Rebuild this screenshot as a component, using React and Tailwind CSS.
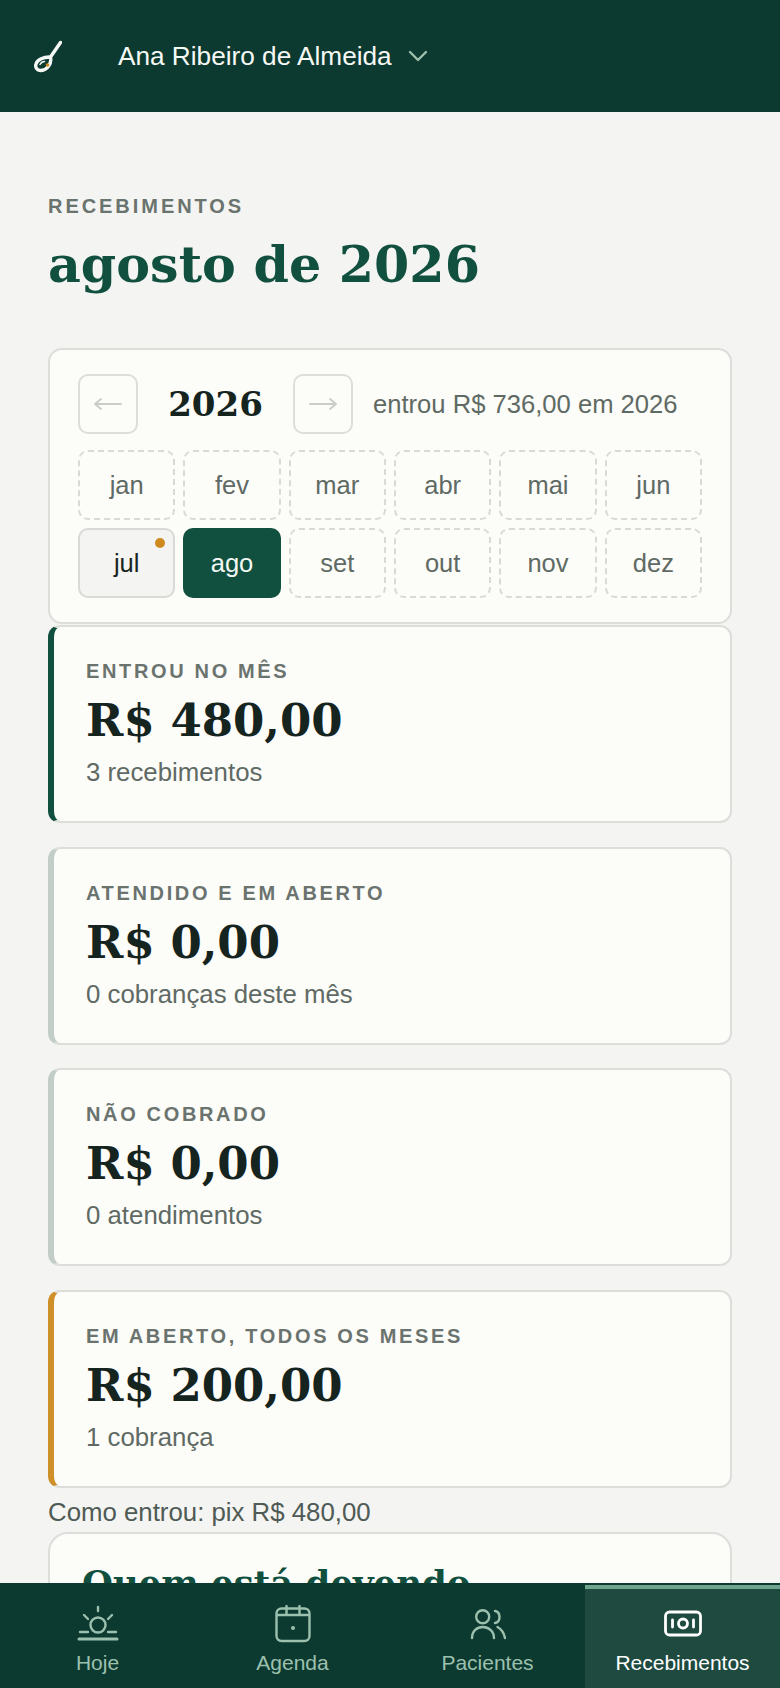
import React from "react";

const sans = "font-['Liberation_Sans',Arial,sans-serif]";
const serif = "font-['DejaVu_Serif',serif]";

const months = [
  { label: "jan" },
  { label: "fev" },
  { label: "mar" },
  { label: "abr" },
  { label: "mai" },
  { label: "jun" },
  { label: "jul", state: "paid" },
  { label: "ago", state: "active" },
  { label: "set" },
  { label: "out" },
  { label: "nov" },
  { label: "dez" },
];

const stats = [
  { label: "ENTROU NO MÊS", value: "R$ 480,00", note: "3 recebimentos", bar: "border-l-[#11503f]" },
  { label: "ATENDIDO E EM ABERTO", value: "R$ 0,00", note: "0 cobranças deste mês", bar: "border-l-[#c3cdc7]" },
  { label: "NÃO COBRADO", value: "R$ 0,00", note: "0 atendimentos", bar: "border-l-[#c3cdc7]" },
  { label: "EM ABERTO, TODOS OS MESES", value: "R$ 200,00", note: "1 cobrança", bar: "border-l-[#cf9029]" },
];

const SunIcon = () => (
  <svg width="42" height="38" viewBox="0 0 42 38" fill="none" stroke="currentColor" strokeWidth="2.4" strokeLinecap="round">
    <circle cx="21" cy="20" r="7.5" />
    <path d="M21 2v4M7 10l4 4M35 10l-4 4M3 27h8M31 27h8" />
    <path d="M2 34h38" strokeWidth="3" />
  </svg>
);

const CalendarIcon = () => (
  <svg width="36" height="38" viewBox="0 0 36 38" fill="none" stroke="currentColor" strokeWidth="2.4" strokeLinecap="round" strokeLinejoin="round">
    <rect x="1.5" y="3.500" width="33" height="32.500" rx="5" />
    <path d="M2 10h32M11.500 1v8M24.500 1v8" />
    <circle cx="18" cy="23" r="2" fill="currentColor" stroke="none" />
  </svg>
);

const PeopleIcon = () => (
  <svg width="36" height="38" viewBox="0 0 36 38" fill="none" stroke="currentColor" strokeWidth="2.4" strokeLinecap="round">
    <circle cx="12.700" cy="11.700" r="6.500" />
    <path d="M2 33C2 26 7 22 12.700 22S24 26 24 33" />
    <path d="M25 6C31 7 31 17 25 18" />
    <path d="M27.500 22C31 24 34 28 35 33" />
  </svg>
);

const MoneyIcon = () => (
  <svg width="38" height="38" viewBox="0 0 38 38" fill="none" stroke="currentColor" strokeWidth="2.8" strokeLinecap="round">
    <rect x="1.500" y="7" width="35" height="23" rx="4" />
    <circle cx="19" cy="18.500" r="4.500" />
    <path d="M8.500 15v7M29.500 15v7" />
  </svg>
);

const navItems = [
  { label: "Hoje", icon: <SunIcon /> },
  { label: "Agenda", icon: <CalendarIcon /> },
  { label: "Pacientes", icon: <PeopleIcon /> },
  { label: "Recebimentos", icon: <MoneyIcon />, active: true },
];

const MonthButton = ({ month }) => {
  if (month.state === "active") {
    return (
      <button className="h-[70px] rounded-[10px] bg-[#11503f] text-[25.5px] font-medium text-[#f4f8f5]">
        {month.label}
      </button>
    );
  }
  if (month.state === "paid") {
    return (
      <button className="relative h-[70px] rounded-[10px] border-2 border-[#d8dad5] bg-[#f4f4f2] text-[25.5px] text-[#18241f]">
        {month.label}
        <span className="absolute right-[8px] top-[8px] h-[10px] w-[10px] rounded-full bg-[#cf8a1f]"></span>
      </button>
    );
  }
  return (
    <button className="h-[70px] rounded-[10px] border-2 border-dashed border-[#d8dad5] text-[25.5px] text-[#5f6a64]">
      {month.label}
    </button>
  );
};

const App = () => {
  return (
    <div className={`flex h-[1688px] w-[780px] flex-col overflow-hidden bg-[#f4f4f2] ${sans}`}>
      {/* Top bar */}
      <header className="flex h-[112px] shrink-0 items-center bg-[#0d3a30] pl-[32px]">
        <svg width="30" height="34" viewBox="0 0 30 34" fill="none" strokeLinecap="round" strokeLinejoin="round">
          <path d="M28.500 3.500L18.500 18C20 25 15 31 9 31.500C4.500 31.500 3 28 4 25C5 21 12 17.500 18.500 18" stroke="#f6f8f5" strokeWidth="3.400" />
          <path d="M8 25.500C9 23.500 11 22.500 12.500 22.500" stroke="#f6f8f5" strokeWidth="1.400" />
          <circle cx="15.500" cy="26" r="1.800" fill="#cf8a1f" />
        </svg>
        <span className="ml-[56px] mt-[2px] text-[26.2px] font-medium text-[#f6f8f5]">Ana Ribeiro de Almeida</span>
        <svg className="ml-[16px]" width="20" height="12" viewBox="0 0 20 12" fill="none" stroke="#9cc0ae" strokeWidth="2.400" strokeLinecap="round" strokeLinejoin="round">
          <path d="M2 2l8 8 8-8" />
        </svg>
      </header>

      <main className="min-h-0 flex-1 overflow-hidden px-[48px] pt-[82px]">
        <p className="text-[20px] font-bold leading-[24px] tracking-[2.950px] text-[#6a736e]">RECEBIMENTOS</p>
        <h1 className={`mt-[14px] text-[50.700px] font-bold leading-[64px] text-[#11503f] ${serif}`}>agosto de 2026</h1>

        {/* Year and months */}
        <section className="mt-[52px] rounded-[14px] border-2 border-[#dcdeda] bg-[#fcfcf9] px-[28px] py-[24px]">
          <div className="flex items-center">
            <button className="flex h-[60px] w-[60px] items-center justify-center rounded-[10px] border-2 border-[#dcdeda]">
              <svg width="28" height="14" viewBox="0 0 28 14" fill="none" stroke="#c9ccc7" strokeWidth="1.800" strokeLinecap="round" strokeLinejoin="round">
                <path d="M1 7h26M7 2L1 7l6 5" />
              </svg>
            </button>
            <span className={`w-[155px] text-center text-[34px] font-bold text-[#16241f] ${serif}`}>2026</span>
            <button className="flex h-[60px] w-[60px] items-center justify-center rounded-[10px] border-2 border-[#dcdeda]">
              <svg width="28" height="14" viewBox="0 0 28 14" fill="none" stroke="#c9ccc7" strokeWidth="1.800" strokeLinecap="round" strokeLinejoin="round">
                <path d="M1 7h26M21 2l6 5-6 5" />
              </svg>
            </button>
            <span className="ml-[20px] text-[25.6px] text-[#5f6a64]">entrou R$ 736,00 em 2026</span>
          </div>
          <div className="mt-[16px] grid grid-cols-6 gap-[8px]">
            {months.map((month) => (
              <MonthButton key={month.label} month={month} />
            ))}
          </div>
        </section>

        {/* Summary cards */}
        <div className="mt-[1px] flex flex-col gap-[23.700px]">
          {stats.map((stat) => (
            <div
              key={stat.label}
              className={`h-[198px] rounded-[12px] border-2 border-l-[6px] border-[#dcdeda] bg-[#fcfcf9] pl-[32px] pt-[32px] ${stat.bar}`}
            >
              <p className="text-[20px] font-bold leading-[24px] tracking-[2.650px] text-[#6a736e]">{stat.label}</p>
              <p className={`mt-[8px] text-[45px] font-bold leading-[60px] text-[#16241f] ${serif}`}>{stat.value}</p>
              <p className="mt-[5px] text-[25.8px] leading-[32px] text-[#5f6a64]">{stat.note}</p>
            </div>
          ))}
        </div>

        <p className="mt-[6px] text-[25.8px] leading-[36px] text-[#4f5a55]">Como entrou: pix R$ 480,00</p>

        <section className="mt-[2px] h-[200px] rounded-[20px] border-2 border-[#dcdeda] bg-[#fcfcf9] px-[32px] pt-[25px]">
          <h2 className={`text-[35.500px] font-bold leading-[50px] text-[#11503f] ${serif}`}>Quem está devendo</h2>
        </section>
      </main>

      {/* Bottom nav */}
      <nav className="grid h-[105px] shrink-0 grid-cols-4 border-t-2 border-[#0d3a30] bg-[#0d3a30]">
        {navItems.map((item) => (
          <div
            key={item.label}
            className={`flex flex-col items-center justify-start ${item.active ? "border-t-[4px] border-[#6fa58f] bg-[#1e4a40] pt-[15px] text-white" : "pt-[19px] text-[#9cc0ae]"}`}
          >
            <div className="flex h-[40px] items-center">{item.icon}</div>
            <span className="mt-[3px] text-[21px]">{item.label}</span>
          </div>
        ))}
      </nav>
    </div>
  );
};

export default App;
